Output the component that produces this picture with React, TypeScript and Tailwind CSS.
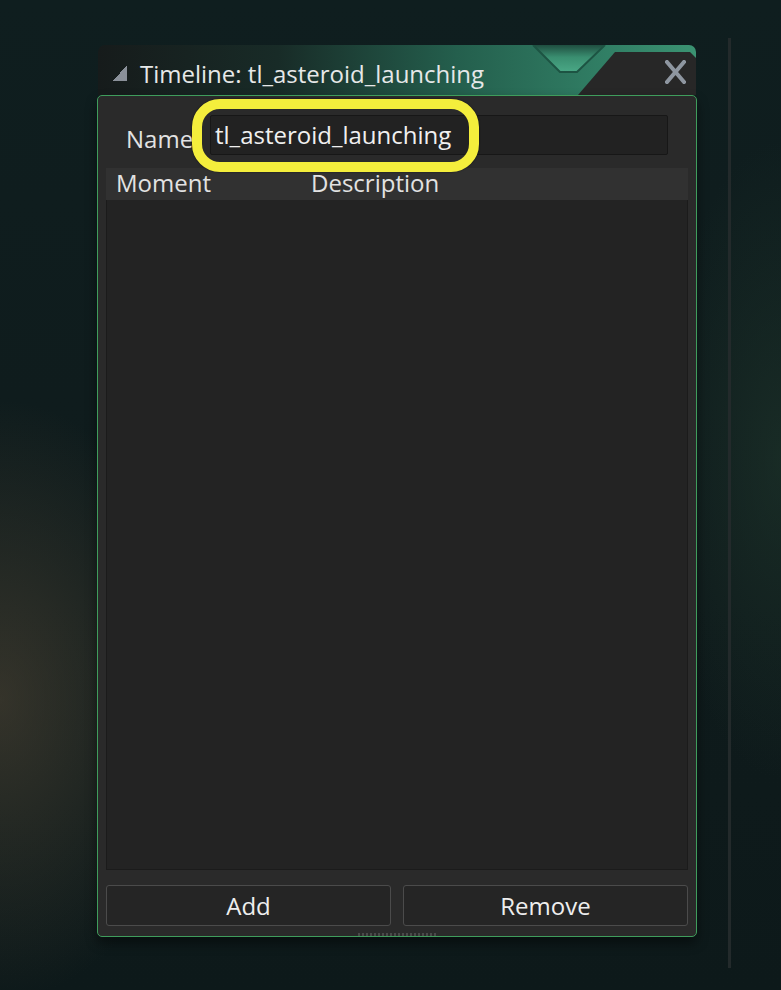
import React from 'react'

const font = { fontFamily: '"Open Sans", "Noto Sans", sans-serif' }

function TitleDecor() {
  // painted background of the title bar: gradient, notch and dark tab
  return (
    <svg className="absolute inset-0" width="598" height="50" viewBox="0 0 598 50" preserveAspectRatio="none">
      <defs>
        <linearGradient id="tb" x1="0" y1="0" x2="1" y2="0">
          <stop offset="0" stopColor="#161b1b" />
          <stop offset="0.3" stopColor="#182b27" />
          <stop offset="0.6" stopColor="#245f4d" />
          <stop offset="0.85" stopColor="#317f65" />
          <stop offset="1" stopColor="#3b9372" />
        </linearGradient>
        <linearGradient id="notch" x1="0" y1="0" x2="0" y2="1">
          <stop offset="0" stopColor="#1f4e40" />
          <stop offset="0.45" stopColor="#3a8e70" />
          <stop offset="1" stopColor="#4aa886" />
        </linearGradient>
      </defs>
      <rect x="0" y="0" width="598" height="50" fill="url(#tb)" />
      <polygon points="435,0 462,27 479,27 507,0" fill="url(#notch)" />
      <polyline points="435,0 462,27 479,27 507,0" fill="none" stroke="#1d5443" strokeWidth="2" />
      <polygon points="517,7 592,7 598,13 598,50 480,50" fill="#272727" />
    </svg>
  )
}

function CornerIcon() {
  return (
    <svg width="14" height="16" viewBox="0 0 14 16" shapeRendering="crispEdges">
      <polygon points="14,0 14,16 0,16" fill="#8a9099" />
    </svg>
  )
}

function CloseIcon() {
  return (
    <svg width="21" height="24" viewBox="0 0 21 24">
      <path d="M2 2 L19 22 M19 2 L2 22" stroke="#8e96a0" strokeWidth="4" strokeLinecap="square" />
    </svg>
  )
}

export default function App() {
  return (
    <div
      style={font}
      className="relative w-[781px] h-[990px] overflow-hidden bg-[#0f1c1d] bg-[image:radial-gradient(ellipse_200px_300px_at_0px_700px,rgba(78,68,52,0.6),transparent),radial-gradient(ellipse_120px_320px_at_781px_460px,rgba(36,62,48,0.45),transparent),linear-gradient(180deg,#0f1e1f_0%,#0f1b1c_60%,#0d191a_100%)]"
    >
      <div className="flex pl-[97px] pt-[38px]">
        {/* window */}
        <div className="mt-[7px] w-[600px] flex flex-col">
          {/* title bar */}
          <div className="relative mx-[1px] h-[50px] rounded-t-[7px] overflow-hidden">
            <TitleDecor />
            <div className="relative flex items-start h-full">
              <div className="ml-[15px] mt-[20px]">
                <CornerIcon />
              </div>
              <div className="ml-[13px] mt-[14px] text-[24px] leading-[30px] text-[#e6e8e8] whitespace-nowrap">
                Timeline: tl_asteroid_launching
              </div>
              <div className="ml-auto mr-[10px] mt-[15px]">
                <CloseIcon />
              </div>
            </div>
          </div>

          {/* body */}
          <div className="relative border border-[#3f9d5c] rounded-[5px] bg-[#2a2a2a] px-[8px] pt-[19px] shadow-[0_6px_12px_rgba(0,0,0,0.45)]">
            <div className="flex h-[40px]">
              <div className="w-[104px] pl-[20px] pt-[9px] text-[24px] leading-[30px] text-[#e2e2e2]">Name</div>
              <div className="flex-1 mr-[20px] flex items-center bg-[#222222] border border-[#171717] rounded-[2px] pl-[4px] text-[24px] leading-[30px] text-[#f0f0f0]">
                tl_asteroid_launching
              </div>
            </div>

            <div className="mt-[13px] h-[32px] bg-[#313131] flex text-[24px] leading-[30px] text-[#e2e2e2]">
              <div className="w-[205px] pl-[10px]">Moment</div>
              <div>Description</div>
            </div>
            <div className="h-[670px] bg-[#232323] border border-t-0 border-[#1b1b1b]" />

            <div className="mt-[15px] grid grid-cols-2 gap-[12px]">
              <button className="h-[41px] rounded-[3px] border border-[#4b4b4b] bg-[#252525] text-[24px] leading-[30px] text-[#eeeeee]">
                Add
              </button>
              <button className="h-[41px] rounded-[3px] border border-[#4b4b4b] bg-[#252525] text-[24px] leading-[30px] text-[#eeeeee]">
                Remove
              </button>
            </div>

            <div className="mt-[7px] flex justify-center">
              <div className="w-[79px] h-[3px] bg-[image:repeating-linear-gradient(90deg,#4a4a4a_0_2px,transparent_2px_4px)]" />
            </div>

            {/* highlight ring */}
            <div className="absolute left-[94px] top-[3px] w-[287px] h-[73px] rounded-[28px] border-[10px] border-[#f4ee3c] shadow-[0_0_2px_rgba(0,0,0,0.6)]" />
          </div>
        </div>

        {/* splitter line */}
        <div className="ml-[31px] w-[3px] h-[930px] bg-[#232a2b]" />
      </div>
    </div>
  )
}
